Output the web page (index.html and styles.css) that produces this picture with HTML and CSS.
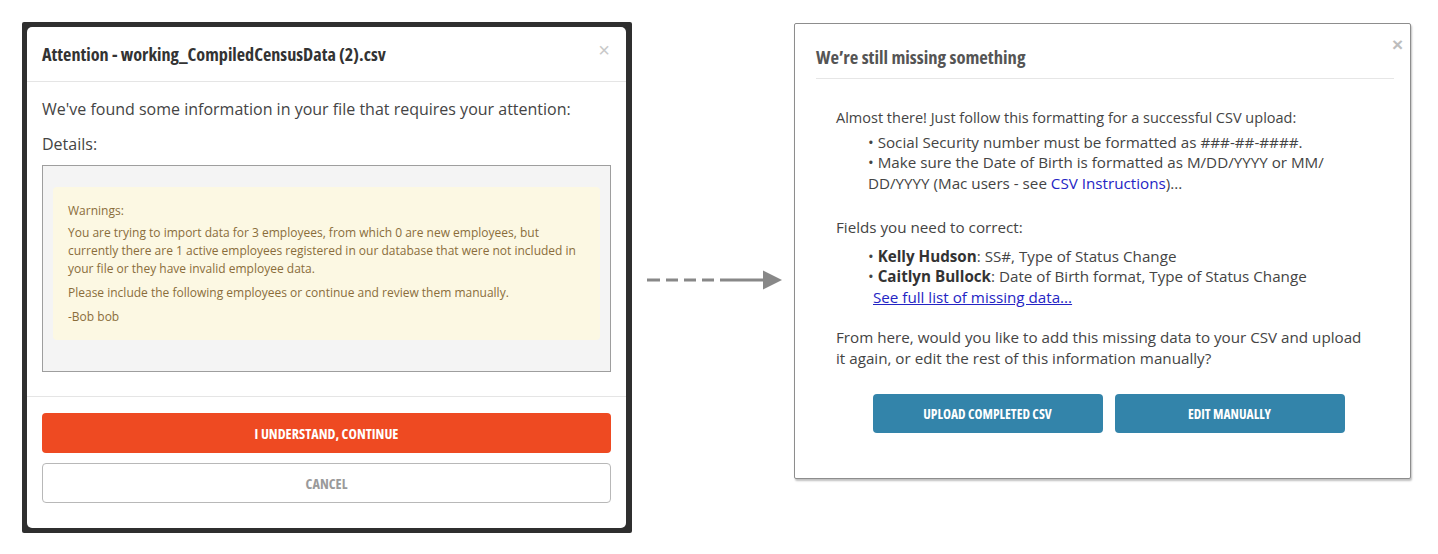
FILE: index.html
```html
<!DOCTYPE html>
<html lang="en">
<head>
<meta charset="utf-8">
<title>CSV import dialogs</title>
<link rel="stylesheet" href="styles.css">
</head>
<body>
<div class="stage">
  <div class="frame">
    <div class="card">
      <div class="card-head">
        <h2 class="card-title">Attention - working_CompiledCensusData (2).csv</h2>
        <span class="close close-left">&times;</span>
      </div>
      <div class="card-body">
        <p class="lead">We've found some information in your file that requires your attention:</p>
        <p class="lead lead-details">Details:</p>
        <div class="details">
          <div class="warning">
            <p class="warn-title">Warnings:</p>
            <p>You are trying to import data for 3 employees, from which 0 are new employees, but currently there are 1 active employees registered in our database that were not included in your file or they have invalid employee data.</p>
            <p>Please include the following employees or continue and review them manually.</p>
            <p>-Bob bob</p>
          </div>
        </div>
      </div>
      <div class="card-foot">
        <button class="btn btn-primary">I UNDERSTAND, CONTINUE</button>
        <button class="btn btn-cancel">CANCEL</button>
      </div>
    </div>
  </div>

  <svg class="arrow" width="140" height="24" viewBox="0 0 140 24">
    <line x1="2" y1="12" x2="123" y2="12" stroke="#888" stroke-width="3" stroke-dasharray="13 6 12 6 12 6 12 6 60 0"/>
    <polygon points="118,2.5 137,12 118,21.5" fill="#888"/>
  </svg>

  <div class="modal">
    <span class="close close-right">&times;</span>
    <div class="modal-head">
      <h2 class="modal-title">We’re still missing something</h2>
    </div>
    <div class="modal-body">
      <p class="m-p m-intro">Almost there! Just follow this formatting for a successful CSV upload:</p>
      <div class="m-list m-list-first">
        <div>• Social Security number must be formatted as ###-##-####.</div>
        <div>• Make sure the Date of Birth is formatted as M/DD/YYYY or MM/<wbr>DD/YYYY (Mac users - see <a class="blue" href="#">CSV Instructions</a>)...</div>
      </div>
      <p class="m-p m-fields">Fields you need to correct:</p>
      <div class="m-list m-list-second">
        <div>• <b>Kelly Hudson</b>: SS#, Type of Status Change</div>
        <div>• <b>Caitlyn Bullock</b>: Date of Birth format, Type of Status Change</div>
        <div class="m-link-row"><a class="blue ul" href="#">See full list of missing data...</a></div>
      </div>
      <p class="m-p m-from">From here, would you like to add this missing data to your CSV and upload it again, or edit the rest of this information manually?</p>
      <div class="m-actions">
        <button class="btn-blue">UPLOAD COMPLETED CSV</button>
        <button class="btn-blue">EDIT MANUALLY</button>
      </div>
    </div>
  </div>
</div>
</body>
</html>
```

FILE: styles.css
```css
* { box-sizing: border-box; }
html, body { margin: 0; padding: 0; background: #ffffff; }
body { font-family: "Open Sans", "Liberation Sans", sans-serif; color: #444; }

.stage {
  display: flex;
  align-items: flex-start;
  padding: 22px 0 0 22px;
}

/* ---------- left dialog ---------- */
.frame {
  width: 610px;
  background: #2f2f2f;
  padding: 5px 6px 5px 5px;
  border-radius: 2px;
}
.card {
  background: #fff;
  border-radius: 5px;
  position: relative;
}
.card-head {
  padding: 15px 15px;
  border-bottom: 1px solid #e5e5e5;
}
.card-title {
  margin: 0;
  font-size: 18.2px;
  line-height: 24px;
  font-weight: 700;
  font-stretch: 75%;
  color: #333;
}
.close {
  position: absolute;
  color: #c8c8c8;
  font-size: 20px;
  line-height: 20px;
  font-family: "Liberation Sans", sans-serif;
}
.close-left { top: 13px; right: 16px; }
.card-body { padding: 15px 15px 24px; }
.lead {
  margin: 0 0 11px;
  font-size: 16px;
  line-height: 24px;
  color: #444;
}
.lead-details { margin-bottom: 9px; }
.details {
  height: 207px;
  border: 1px solid #9e9e9e;
  background: #f4f4f4;
  padding: 21px 10px 0 10px;
}
.warning {
  background: #fcf8e3;
  border-radius: 4px;
  padding: 15px 15px 14px 15px;
  color: #8a6d3b;
  font-size: 12px;
  line-height: 18px;
}
.warning p { margin: 0 0 6px; }
.warning p:last-child { margin-bottom: 0; }
.warning .warn-title { margin-bottom: 4px; }
.card-foot {
  border-top: 1px solid #e5e5e5;
  padding: 16px 15px 25px;
  display: flex;
  flex-direction: column;
  gap: 10px;
}
.btn {
  height: 40px;
  border-radius: 4px;
  font-family: "Open Sans", sans-serif;
  font-weight: 700;
  font-stretch: 75%;
  font-size: 14.2px;
  cursor: pointer;
}
.btn-primary { background: #ee4a22; color: #fff; border: none; }
.btn-cancel { background: #fff; color: #9a9a9a; border: 1px solid #b8b8b8; }

/* ---------- arrow ---------- */
.arrow { margin: 246px 0 0 13px; flex: none; }

/* ---------- right dialog ---------- */
.modal {
  position: relative;
  width: 617px;
  height: 456px;
  margin: 1px 0 0 9px;
  border: 1px solid #8d8d8d;
  border-radius: 2px;
  box-shadow: 1px 2px 2px rgba(0,0,0,.25);
  background: #fff;
}
.close-right { top: 11px; right: 7px; color: #bdbdbd; font-size: 19px; font-weight: 700; }
.modal-head {
  margin: 0 16px 0 21px;
  padding: 21px 0 9px;
  border-bottom: 1px solid #e6e6e6;
}
.modal-title {
  margin: 0;
  font-size: 18.6px;
  line-height: 24px;
  font-weight: 700;
  font-stretch: 75%;
  color: #555;
}
.modal-body {
  padding: 29px 40px 0 41px;
  font-size: 15.2px;
  line-height: 20.5px;
  color: #444;
}
.m-p { margin: 0; }
.m-intro { font-size: 14.5px; }
.m-list { padding-left: 32px; }
.m-list-first { margin-top: 3px; padding-right: 28px; }
.m-fields { margin-top: 24px; }
.m-list-second { margin-top: 8px; }
.m-list b { color: #333; }
.m-link-row { padding-left: 5px; }
.blue { color: #2424c4; text-decoration: none; }
.ul { text-decoration: underline; }
.m-from { margin-top: 20px; }
.m-actions {
  margin-top: 26px;
  display: flex;
  justify-content: center;
  gap: 12px;
  padding-left: 11px;
}
.btn-blue {
  width: 230px;
  height: 39px;
  border: none;
  border-radius: 4px;
  background: #3384aa;
  color: #fff;
  font-family: "Open Sans", sans-serif;
  font-weight: 700;
  font-stretch: 75%;
  font-size: 13.5px;
}
```
